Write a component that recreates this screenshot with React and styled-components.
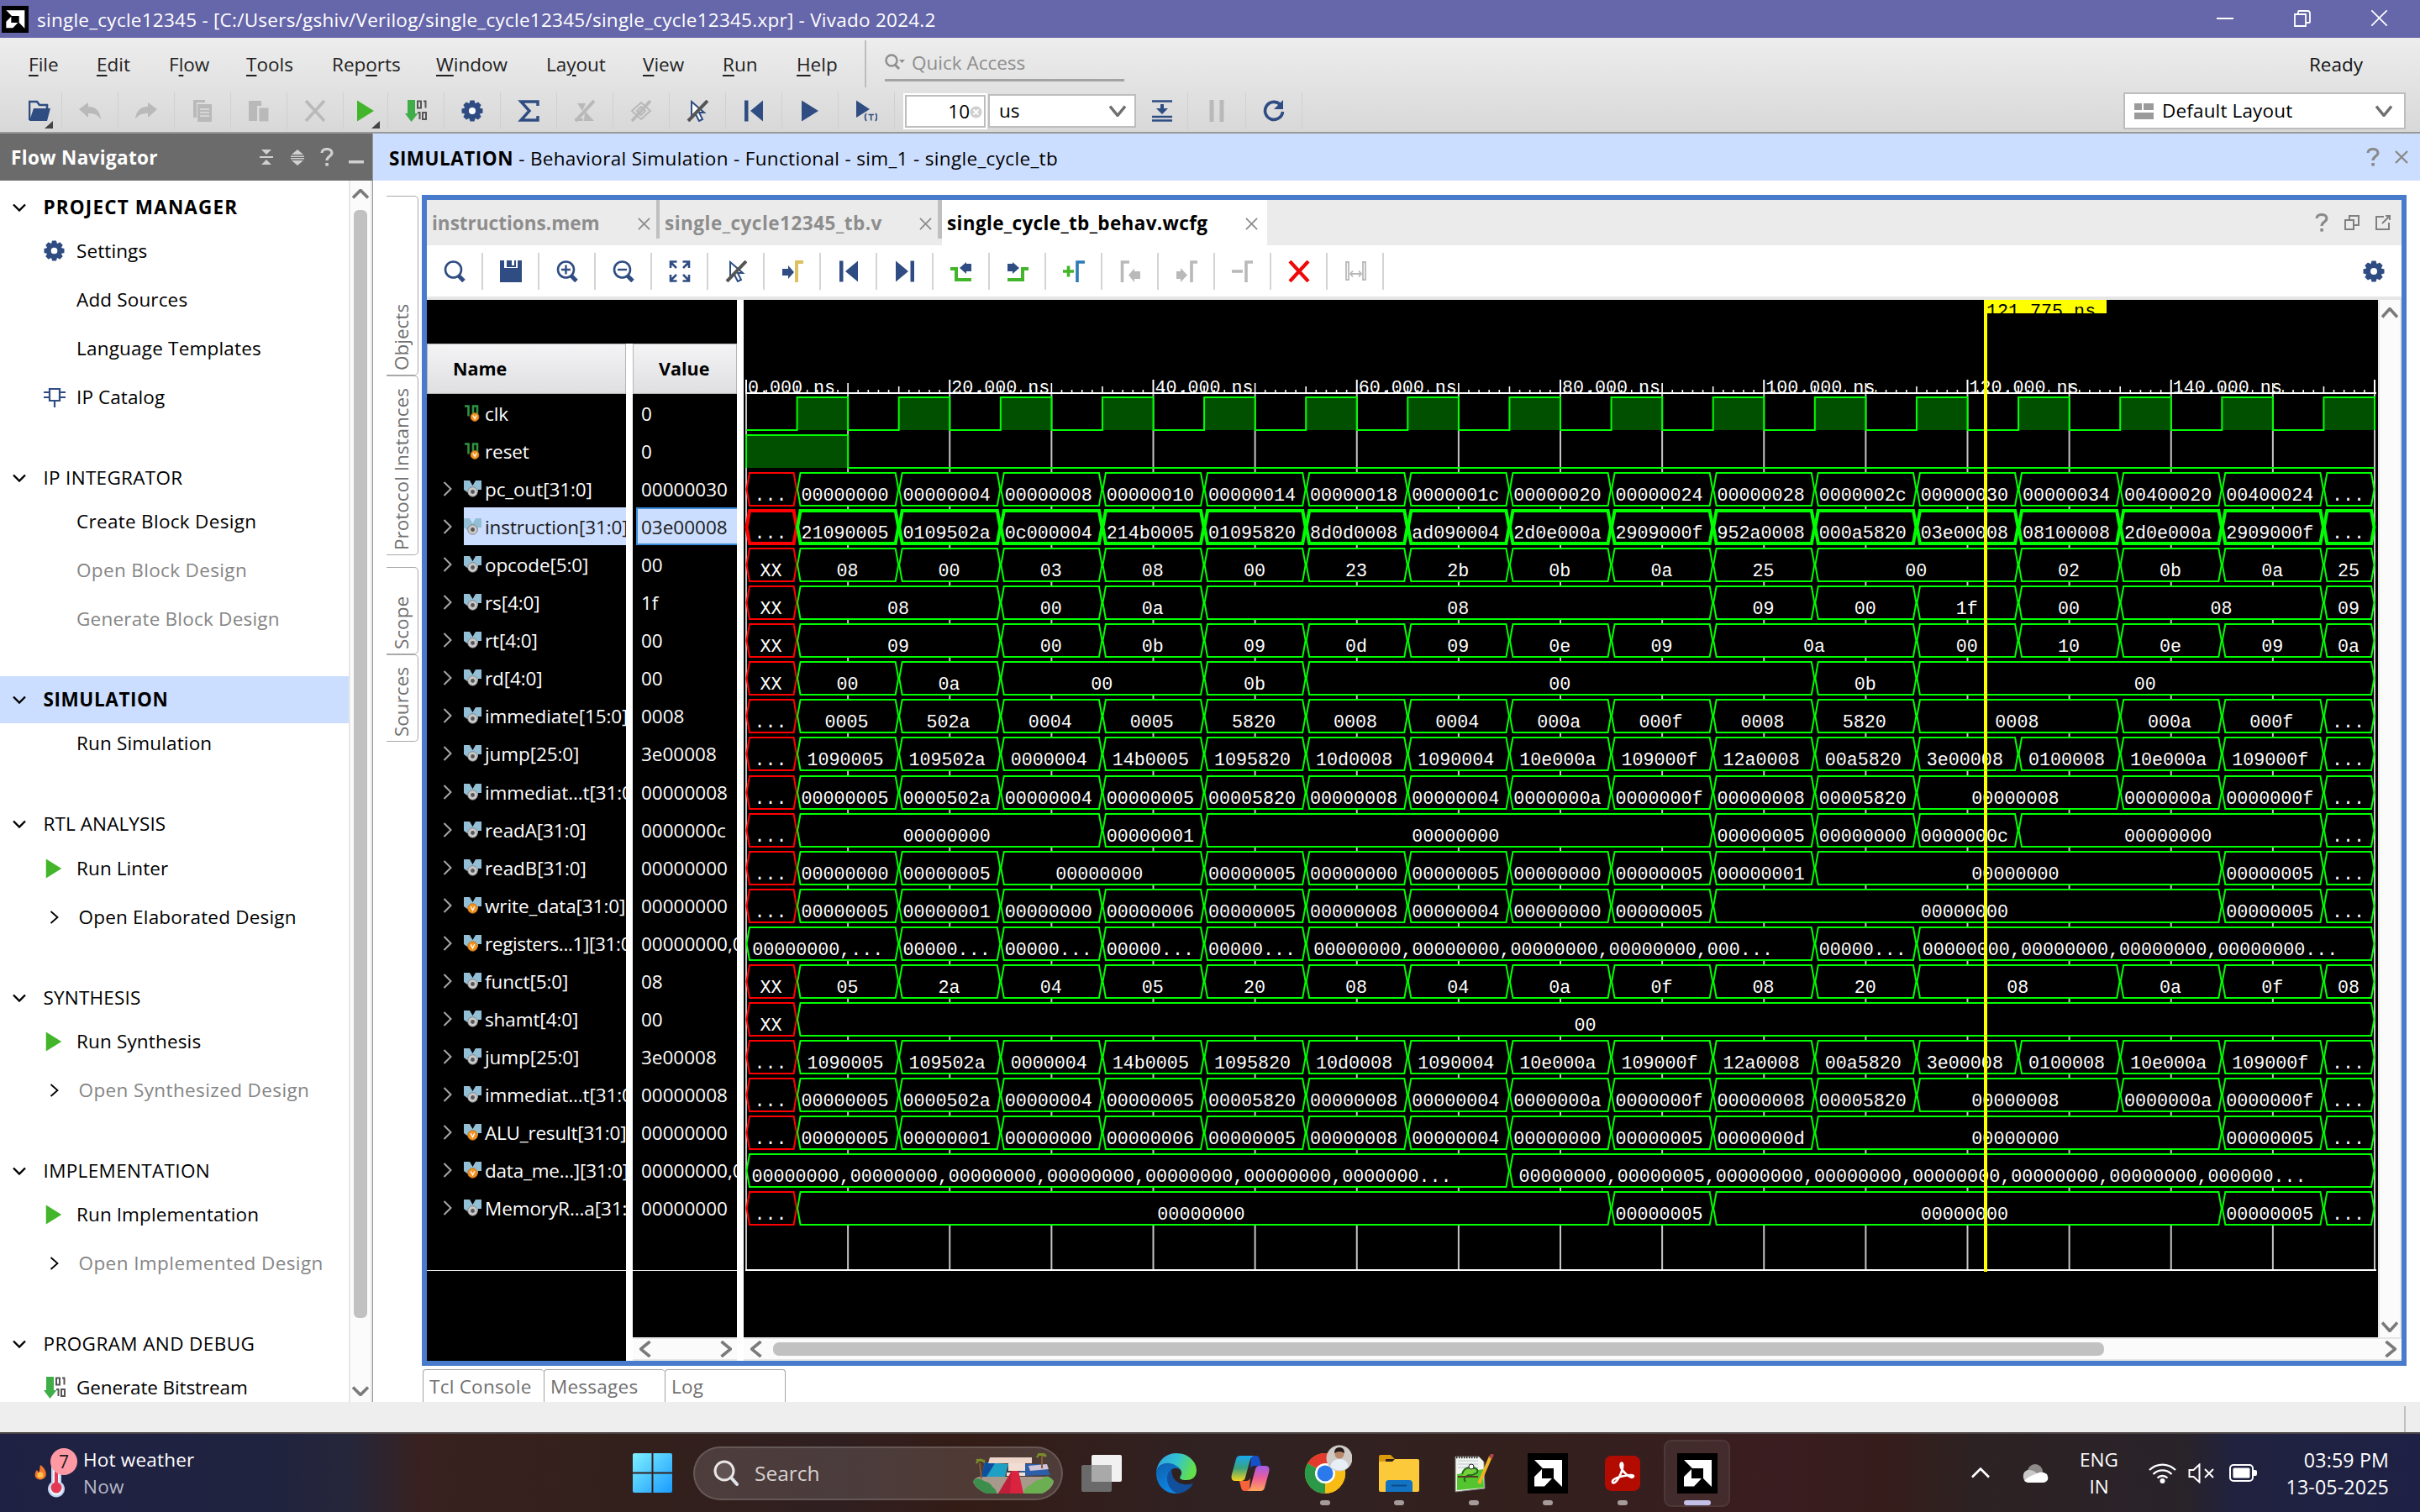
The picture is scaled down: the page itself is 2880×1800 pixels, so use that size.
import React from 'react';
import styled, { createGlobalStyle, css } from 'styled-components';

const UI = '"Open Sans", "Noto Sans", sans-serif';
const MONO = '"Liberation Mono", monospace';
const NAVY = '#2f4d82';
const GREEN = '#42b52a';
const OFF = '#b9b9b9';

const Global = createGlobalStyle`
  *, *::before, *::after { box-sizing: border-box; }
  html, body { margin: 0; padding: 0; background: #fff; }
  body { width: 2880px; height: 1800px; overflow: hidden; font-family: ${UI}; font-size: 22.5px; line-height: 30px; color: #000; }
  svg { display: block; flex: none; }
`;

const Screen = styled.div`
  width: 2880px; height: 1800px; display: flex; flex-direction: column; overflow: hidden; background: #fff;
`;

/* ---------- title, menus, toolbar ---------- */
const TitleBar = styled.header`
  height: 45px; flex: none; background: #6666aa; color: #fff; display: flex; align-items: center; padding-left: 2px;
`;
const TitleText = styled.span`flex: 1; padding: 2px 0 0 10px; white-space: pre; letter-spacing: 0.25px;`;
const WindowButtons = styled.div`display: flex; gap: 70px; padding-right: 38px; align-items: center; padding-bottom: 2px;`;

const Chrome = styled.div`
  height: 114px; flex: none; background: linear-gradient(#ededed, #d8d8d8); border-bottom: 2px solid #999;
  display: flex; flex-direction: column;
`;
const MenuBar = styled.nav`height: 62px; display: flex; padding-left: 34px; align-items: center;`;
const MenuItem = styled.span`width: ${p => p.$w}px; color: #222; white-space: nowrap; padding-top: 2px;`;
const Mn = styled.span`text-decoration: underline; text-decoration-thickness: 1.5px; text-underline-offset: 4px;`;
const QuickWrap = styled.div`
  border-left: 2px solid #bdbdbd; height: 56px; padding-left: 22px; display: flex; align-items: flex-start; flex: 1;
`;
const Quick = styled.div`
  width: 285px; height: 49px; border-bottom: 3px solid #a3a3a3; display: flex; align-items: center; gap: 6px; color: #8e8e8e; padding-top: 8px;
`;
const Ready = styled.span`padding-right: 68px; color: #111; padding-top: 2px;`;

const ToolBar = styled.div`height: 50px; display: flex; align-items: center; padding: 0 17px 0 15px;`;
const Tool = styled.div`
  width: ${p => p.$w || 67}px; height: 44px; border-right: 1px solid #d0d0d0; display: flex; align-items: center; justify-content: center;
  position: relative; padding-left: ${p => p.$pl || 0}px;
`;
const Corner = styled.svg`position: absolute; right: ${p => p.$r}px; bottom: 1px;`;
const NumBox = styled.div`
  width: 100px; height: 43px; margin-left: 10px; background: #fff;
  box-shadow: inset 0 0 0 2px #fff, inset 0 0 0 4px #bdbdbd; display: flex; align-items: center; justify-content: flex-end; padding: 2px 6px 0 2px;
`;
const Select = styled.div`
  width: ${p => p.$w}px; height: ${p => p.$h}px; border: 2px solid #bdbdbd; background: #fff; display: flex; align-items: center;
  padding: 0 ${p => p.$pr}px 0 11px; margin-left: ${p => p.$ml || 0}; gap: 10px;
`;
const Grow = styled.span`flex: 1; letter-spacing: ${p => p.$ls || 0}px;`;
const HeadName = styled.b`letter-spacing: 0.5px;`;

/* ---------- body ---------- */
const Body = styled.div`height: 1510px; flex: none; display: flex;`;
const Side = styled.aside`width: 444px; display: flex; flex-direction: column; border-right: 1px solid #999;`;
const SideHead = styled.div`
  height: 56px; flex: none; background: #6b6b6b; color: #fff; font-weight: 700; display: flex; align-items: center; padding: 2px 10px 0 13px;
  letter-spacing: 0.35px;
`;
const HeadIcons = styled.div`margin-left: auto; display: flex; align-items: center; gap: 18px; padding-bottom: 2px;`;
const SideBody = styled.div`flex: 1; min-height: 0; display: flex;`;
const Tree = styled.div`width: 415px; height: 1454px; padding-top: 3.5px; overflow: hidden;`;
const Section = styled.section`margin-bottom: 39px;`;
const Heading = styled.div`
  height: 56px; display: flex; align-items: center; font-weight: ${p => (p.$bold ? 700 : 400)}; background: ${p => (p.$active ? '#ccdeff' : 'transparent')};
  letter-spacing: ${p => p.$ls || 0.2}px;
`;
const ChevSlot = styled.span`width: 51.5px; padding-left: 15px;`;
const Items = styled.div`margin-top: -4.75px;`;
const Item = styled.div`
  height: 58px; display: flex; align-items: center; color: ${p => (p.$off ? '#858585' : '#000')}; letter-spacing: ${p => p.$ls || 0}px;
`;
const IconSlot = styled.span`width: ${p => (p.$open ? 93.5 : 91)}px; padding-left: ${p => (p.$open ? 59 : 52)}px;`;
const VTrack = styled.div`
  width: 28px; background: #fbfbfb; border-left: 2px solid #e6e6e6; border-right: 2px solid #e6e6e6; display: flex; flex-direction: column;
  align-items: center; padding: ${p => p.$pad || '10px 0'};
`;
const VThumb = styled.div`width: 16px; height: 1319px; margin-top: 13px; border-radius: 6px; background: #c1c1c1;`;

const Main = styled.main`flex: 1; min-width: 0; display: flex; flex-direction: column;`;
const MainHead = styled.div`
  height: 56px; flex: none; background: #ccdeff; display: flex; align-items: center; padding: 3px 14px 0 19px; white-space: pre;
`;
const HeadTools = styled.div`display: flex; align-items: center; gap: 18px; padding-bottom: 3px;`;
const MainBody = styled.div`flex: 1; min-height: 0; display: flex; padding: 17px 16px 0 16px;`;
const Rail = styled.div`width: 38px; margin-right: 4px; padding-top: 1px;`;
const RailTab = styled.div`
  height: ${p => p.$h}px; width: 38px; margin-top: ${p => p.$mt || 0}px; border: 1.5px solid #a9a9a9; border-right: 0; border-radius: 5px 0 0 5px;
  writing-mode: vertical-rl; transform: rotate(180deg); color: #707070; padding-top: 5px; line-height: 35px; white-space: nowrap;
`;
const Center = styled.div`flex: 1; min-width: 0; display: flex; flex-direction: column;`;
const Panel = styled.div`height: 1394px; flex: none; border: 6px solid #497bcd; display: flex; flex-direction: column;`;
const Tabs = styled.div`height: 54px; flex: none; background: #ebebeb; display: flex; align-items: stretch;`;
const Tab = styled.div`
  width: ${p => p.$w}px; padding: 2px ${p => (p.$on ? 11 : 7)}px 0 6px; display: flex; align-items: center; justify-content: space-between; font-weight: 700;
  color: ${p => (p.$on ? '#000' : '#8d8d8d')}; background: ${p => (p.$on ? '#fff' : 'transparent')}; white-space: nowrap; letter-spacing: ${p => p.$ls || 0}px;
`;
const TabRule = styled.div`width: ${p => p.$w}px; height: 46px; background: #bfbfbf;`;
const TabIcons = styled.div`margin-left: auto; display: flex; align-items: center; gap: 19px; padding-right: 13px;`;
const Tools2 = styled.div`height: 65px; flex: none; border-bottom: 4px solid #e6e6e6; display: flex; align-items: center;`;
const Tool2 = styled.div`
  width: 67px; height: 44px; border-right: 2px solid #d4d4d4; display: flex; align-items: center; justify-content: center;
`;
const Wave = styled.div`flex: 1; min-height: 0; display: flex; background: #fff;`;
const Left = styled.div`width: 369px; flex: none; display: flex; flex-direction: column;`;
const LeftTop = styled.div`height: 52px; flex: none; background: #000;`;
const Cols = styled.div`flex: 1; display: flex; justify-content: space-between;`;
const NameCol = styled.div`width: 237px; background: #000; color: #fff; overflow: hidden;`;
const ValueCol = styled.div`width: 124px; background: #000; color: #fff; overflow: hidden; display: flex; flex-direction: column;`;
const ColHead = styled.div`
  height: 60px; flex: none; background: linear-gradient(#f4f4f5, #dfdfe2); border: 1px solid #b5b5b8; color: #000; font-weight: 700; font-size: 21.5px;
  display: flex; align-items: center; padding-left: 30px;
`;
const NameRow = styled.div`height: ${p => p.$h}px; display: flex; align-items: center; white-space: nowrap;`;
const Expander = styled.span`width: 44px; padding-left: 19px; flex: none;`;
const NameCell = styled.span`
  width: 193px; height: 100%; display: flex; align-items: center; gap: 4px; overflow: hidden; flex: none; letter-spacing: -0.2px;
  background: ${p => (p.$sel ? '#ccdeff' : 'transparent')}; color: ${p => (p.$sel ? '#1a1a1a' : '#fff')};
`;
const NameText = styled.span`padding-top: 2px; letter-spacing: ${p => p.$ls || -0.1}px;`;
const ValueRow = styled.div`
  height: ${p => p.$h}px; flex: none; display: flex; align-items: center; white-space: nowrap; padding-left: 10px; padding-top: 2px;
  ${p => p.$sel && css`background: #ccdeff; color: #1a1a1a; border: 2px solid #3c8edd; border-right: 0; margin-left: 4px; padding-left: 4px;`}
`;
const EndRule = styled.div`height: 53px; border-bottom: 1px solid #e8e8e8; flex: none;`;
const HTrack = styled.div`
  height: 28px; flex: none; background: #fbfbfb; border-top: 2px solid #e6e6e6; border-bottom: 2px solid #e6e6e6; display: flex; align-items: center;
  justify-content: space-between; padding: 0 6px 0 8px; margin-top: ${p => p.$mt || 0};
`;
const HThumb = styled.div`width: 1584px; height: 16px; margin: 0 auto 0 13px; border-radius: 7px; background: #c1c1c1;`;
const WaveSide = styled.div`width: 1973px; margin-left: 8px; display: flex; flex-direction: column;`;
const WaveTop = styled.div`height: 1235px; flex: none; display: flex; background: #000;`;
const SpaceDiv = styled.div`flex: 1;`;

const Bottom = styled.div`display: flex; padding: 4px 0 0 1px; height: 43px;`;
const BottomTab = styled.div`
  width: 144px; height: 39px; border: 1.5px solid #a3a3a3; border-bottom: 0; border-right-width: ${p => (p.$last ? 1.5 : 0)}px; border-radius: 4px 4px 0 0;
  padding: 5px 0 0 7px; color: #707070; white-space: nowrap; letter-spacing: 0.25px;
`;
const Status = styled.div`height: 36px; flex: none; background: #eeeeee; display: flex; padding: 5px 17px 0 0; justify-content: flex-end;`;
const StatusRule = styled.div`width: 2px; background: #bfbfbf;`;

/* ---------- taskbar ---------- */
const TaskBar = styled.footer`
  height: 95px; flex: none; border-top: 2px solid #4a4443; display: flex; align-items: center; color: #fff;
  background: linear-gradient(90deg, #1f2144 0, #20233f 320px, #26263a 420px, #38211f 500px, #33201c 740px, #301f20 1000px, #341c16 1150px, #302223 1450px, #33201d 1800px, #3a1d20 2120px, #351d1b 2250px, #2d2223 2350px, #29232a 2600px, #20223f 2660px, #1e2145 2880px);
`;
const Weather = styled.div`display: flex; width: 753px; padding-left: 38px; align-items: center; gap: 5px;`;
const Stack = styled.div`
  display: flex; flex-direction: column; align-items: ${p => p.$al || 'flex-start'}; line-height: 32px; width: ${p => p.$w || 'auto'}; white-space: nowrap;
  letter-spacing: ${p => p.$ls || 0}px; font-size: ${p => p.$fs || 22.5}px;
`;
const Dim = styled.span`color: #b6b8c6;`;
const Search = styled.div`
  width: 440px; height: 64px; margin-left: 25px; border-radius: 32px; background: rgba(255,255,255,0.135); border: 2px solid rgba(255,255,255,0.14);
  display: flex; align-items: center; padding: 0 9px 0 22px; color: #d6d0cf; font-size: 24.5px;
`;
const AppIcon = styled.div`
  width: ${p => p.$w || 88.5}px; height: 80px; display: flex; flex-direction: column; align-items: center; justify-content: center; position: relative;
  &::after { content: ''; display: ${p => (p.$run ? 'block' : 'none')}; position: absolute; bottom: ${p => (p.$on ? 0 : 2)}px; width: ${p => (p.$on ? 32 : 12)}px; height: 6px; border-radius: 3px;
    background: ${p => (p.$on ? '#c4bfe6' : '#a49b9a')}; }
  ${p => p.$on && css`background: rgba(255,255,255,0.06); border: 2px solid rgba(255,255,255,0.06); border-radius: 9px;`}
`;
const Apps = styled.div`display: flex; align-items: center; margin-left: 2px;`;
const Tray = styled.div`display: flex; align-items: center; margin-left: auto; padding-right: 37px;`;
const Gap = styled.span`width: ${p => p.$w}px; flex: none;`;

/* ---------- icons ---------- */
const I = ({ s = 26, w, h, vb, children, ...r }) => (
  <svg width={w || s} height={h || s} viewBox={vb || '0 0 26 26'} fill="none" {...r}>{children}</svg>
);
const Gear = ({ s = 26 }) => (
  <I s={s}>
    <g fill={NAVY}>
      {[0, 45, 90, 135].map(a => <path key={a} d="M10.500 0.500h5l1.500 5v15l-1.500 5h-5l-1.500-5v-15z" transform={`rotate(${a} 13 13)`} />)}
      <circle cx="13" cy="13" r="9.200" />
    </g>
    <circle cx="13" cy="13" r="4" fill="#fff" />
  </I>
);
const Play = ({ s = 26, c = GREEN }) => <I s={s}><path d="M3 0.500L23 13 3 25.500z" fill={c} /></I>;
const Bits = () => (
  <I>
    <path d="M3 0h9v16h3.500L7.500 26 0 16h3z" fill="#3fae49" />
    <g stroke="#555" strokeWidth="2"><path d="M15 1.500h4v8h-4zM22 1.500h2.500v8M15 15h2.500v8M21 15h4v8h-4z" /></g>
  </I>
);
const Chip = () => (
  <I><path d="M7 3h12v14H7zM0 7h7M0 13h7M19 7h7M19 13h7M13 17v8" stroke={NAVY} strokeWidth="2.200" /></I>
);
const Chev = ({ d = 'down', c = '#000', w = 16, h = 9, sw = 2.4 }) => {
  const P = {
    down: `M1 1.500L${w / 2} ${h - 1.5}L${w - 1} 1.500`, up: `M1 ${h - 1.5}L${w / 2} 1.500L${w - 1} ${h - 1.5}`,
    right: `M1.500 1L${w - 1.5} ${h / 2}L1.500 ${h - 1}`, left: `M${w - 1.5} 1L1.500 ${h / 2}L${w - 1.5} ${h - 1}`,
  };
  return <I w={w} h={h} vb={`0 0 ${w} ${h}`}><path d={P[d]} stroke={c} strokeWidth={sw} /></I>;
};
const Cross = ({ s = 16, c = '#8a8a8a', sw = 2 }) => (
  <I s={s} vb="0 0 16 16"><path d="M1 1l14 14M15 1L1 15" stroke={c} strokeWidth={sw} /></I>
);
const Help = ({ c = '#8a8a8a' }) => (
  <I w={16} h={22} vb="0 0 16 22"><path d="M2 6c0-6 12-6 12 0 0 4-6 4-6 9" stroke={c} strokeWidth="3.200" /><path d="M6.300 18h3.600v3.600H6.300z" fill={c} /></I>
);
const Amd = ({ s = 48 }) => (
  <I s={s} vb="0 0 48 48">
    <path d="M0 0h48v48H0z" fill="#000" />
    <path d="M8 8h33v32L31 30V18H18zM8 28l9-9v11h12l-9 9.500H8z" fill="#fff" />
  </I>
);
const NoCursor = () => (
  <I><path d="M6 2v19l5-4 4 8 4-2-4-8h6z" fill="#fff" stroke={NAVY} strokeWidth="2" /><path d="M2 25L25 1" stroke="#555" strokeWidth="4" /></I>
);
const Skip = ({ flip }) => (
  <I><g transform={flip ? 'translate(26 0) scale(-1 1)' : undefined} fill={NAVY}><path d="M2 0.500h4.500v25H2zM24 0.500v25L9 13z" /></g></I>
);
const Mag = ({ sign }) => (
  <I>
    <circle cx="11.500" cy="11" r="9.500" stroke={NAVY} strokeWidth="2.600" />
    <path d="M18 18.500l6 6" stroke={NAVY} strokeWidth="5" />
    {sign && <path d={sign === '+' ? 'M6 11h11M11.500 5.500v11' : 'M6 11h11'} stroke={NAVY} strokeWidth="2.400" />}
  </I>
);
const Signal = ({ kind }) => (
  <I w={21} h={20} vb="0 0 21 20">
    {kind === 'scalar'
      ? <path d="M1 1.500h4.500v12M11 13V1.500h5v13" stroke="#2f9140" strokeWidth="2.600" />
      : <path d="M0 0h7l3.500 6L14 0h7v11h-4v3H4l-4-3z" fill="#93bfd6" />}
    <circle cx={kind === 'scalar' ? 13 : 10.5} cy={kind === 'scalar' ? 14.5 : 13.5} r={kind === 'scalar' ? 5 : 5.8} fill={kind === 'net' ? '#c9c9c9' : '#f39323'} stroke={kind === 'net' ? '#777' : '#b96a10'} strokeWidth="0.800" />
    {kind === 'net'
      ? <circle cx="10.500" cy="13.500" r="2.400" fill="#555" />
      : <path d={kind === 'scalar' ? 'M10.800 12.500l2.200 4 2.200-4' : 'M8.300 11.300l2.200 4.500 2.200-4.500'} stroke="#fff" strokeWidth="1.300" />}
  </I>
);

const FIRST_TOOLS = [
  { w: 59, pl: 6, corner: 10, i: <I><path d="M1 24V2h9l3 4h9v5" stroke={NAVY} strokeWidth="2.600" /><path d="M6 10h20l-4 15H1z" fill={NAVY} /></I> },
  { i: <I><path d="M0 11L11 3v5c8 0 14 4 15 15-4-6-8-7-15-7v5z" fill={OFF} /></I> },
  { i: <I><path d="M26 11L15 3v5C7 8 1 12 0 23c4-6 8-7 15-7v5z" fill={OFF} /></I> },
  { i: <I><path d="M2 0h14v3H6v18H2z" fill={OFF} /><path d="M7 5h17v21H7z" fill={OFF} /><path d="M10 11h11M10 15h11M10 19h11" stroke="#dedede" strokeWidth="1.600" /></I> },
  { i: <I><path d="M1 1h15v6h-5v18H1z" fill={OFF} /><path d="M13 9h12v17H13z" fill={OFF} stroke="#dedede" /></I> },
  { i: <I><path d="M2 1l22 24M24 1L2 25" stroke={OFF} strokeWidth="3.600" /></I> },
  { w: 53, corner: 9, i: <Play /> },
  { i: <Bits /> },
  { i: <Gear /> },
  { i: <I><path d="M24 7V2H4l10 11L4 24h20v-5" stroke={NAVY} strokeWidth="3.400" /></I> },
  { i: <I><path d="M2 25L24 1" stroke={OFF} strokeWidth="4" /><path d="M4 4h10l-4 9zM13 13l11 12H12zM1 25h10v-3H1z" fill={OFF} /></I> },
  { i: <I><path d="M2 25L24 1" stroke={OFF} strokeWidth="3.600" /><path d="M2 13L13 3l11 10-11 10zM8 13l5-5 5 5-5 5z" stroke={OFF} strokeWidth="2" /></I> },
  { i: <NoCursor /> },
  { i: <Skip /> },
  { i: <Play c={NAVY} /> },
  { i: <I><path d="M1 0.500L17 11 1 21z" fill={NAVY} /><path d="M13 16q-3 4 0 9M24 16q3 4 0 9M15.500 17.500h6.500M18.700 17.500v7" stroke={NAVY} strokeWidth="1.600" /></I> },
];

const WAVE_TOOLS = [
  <Mag />,
  <I><path d="M0 0h5v9h16V0h5v26H0z" fill={NAVY} /><path d="M8 0h6v6h3V0h2v8H8z" fill={NAVY} /></I>,
  <Mag sign="+" />,
  <Mag sign="-" />,
  <I><g stroke={NAVY} strokeWidth="2.600"><path d="M2 9V1.500h7.500M2 2l7 7M24 9V1.500h-7.500M24 2l-7 7M2 17v7.500h7.500M2 24l7-7M24 17v7.500h-7.500M24 24l-7-7" /></g></I>,
  <NoCursor />,
  <I><path d="M1 10h7V6l7 8-7 8v-4H1z" fill={NAVY} /><path d="M18 26V2h8" stroke="#dcc25e" strokeWidth="4" /></I>,
  <Skip />,
  <Skip flip />,
  <I><path d="M25 4v9h-6v3l-8-7 8-7v2z" fill={NAVY} /><path d="M0 10h7v13h18" stroke={GREEN} strokeWidth="4" /></I>,
  <I><path d="M1 4v9h6v3l8-7-8-7v2z" fill={NAVY} /><path d="M26 10h-7v13H1" stroke={GREEN} strokeWidth="4" /></I>,
  <I><path d="M0 13h13M6.500 6.500v13" stroke={GREEN} strokeWidth="3.600" /><path d="M17 26V2h9" stroke="#2c7bb6" strokeWidth="3.600" /></I>,
  <I><path d="M3.500 26V2H12" stroke={OFF} strokeWidth="3.600" /><path d="M25 13v9h-7v4l-7-8.500 7-8v3.500z" fill={OFF} /></I>,
  <I><path d="M19 26V2h7" stroke={OFF} strokeWidth="3.600" /><path d="M1 13v9h5v4l8-8.500L6 9v4z" fill={OFF} /></I>,
  <I><path d="M17 26V2h8" stroke={OFF} strokeWidth="3.600" /><path d="M0 13h13" stroke={OFF} strokeWidth="3.600" /></I>,
  <I><path d="M2 1l22 24M24 1L2 25" stroke="#ee0a0a" strokeWidth="4.200" /></I>,
  <I><path d="M2 2h3v21H2zM22 2h3v21h-3z" stroke={OFF} strokeWidth="1.800" /><path d="M7 16h13M10 12.500L7 16l3 3.500M17 12.500l3 3.500-3 3.500" stroke={OFF} strokeWidth="1.800" /></I>,
];

/* ---------- sidebar data ---------- */
const TREE = [
  { t: 'PROJECT MANAGER', bold: 1, ls: 1.15, items: [['Settings', 'gear', 0, 0.1], ['Add Sources', 0, 0, 0.15], ['Language Templates', 0, 0, 0.2], ['IP Catalog', 'chip', 0, 0.1]] },
  { t: 'IP INTEGRATOR', ls: 0.3, items: [['Create Block Design', 0, 0, 0.3], ['Open Block Design', 0, 1, 0.35], ['Generate Block Design', 0, 1, 0.22]] },
  { t: 'SIMULATION', bold: 1, ls: 0.6, active: 1, items: [['Run Simulation', 0, 0, 0.15]] },
  { t: 'RTL ANALYSIS', ls: 0.1, items: [['Run Linter', 'play', 0, 0.1], ['Open Elaborated Design', 'open', 0, 0.2]] },
  { t: 'SYNTHESIS', ls: 0.2, items: [['Run Synthesis', 'play', 0, 0.15], ['Open Synthesized Design', 'open', 1, 0.38]] },
  { t: 'IMPLEMENTATION', ls: 0.35, items: [['Run Implementation', 'play', 0, 0.1], ['Open Implemented Design', 'open', 1, 0.42]] },
  { t: 'PROGRAM AND DEBUG', ls: 0.4, items: [['Generate Bitstream', 'bits', 0, -0.12]] },
];
const SIDE_ICON = {
  gear: <Gear s={25} />, chip: <Chip />, play: <Play s={24} />, bits: <Bits />, open: <Chev d="right" w={11} h={16} sw={1.8} />,
};

/* ---------- waveform data: [text, number of 10 ns cycles] ---------- */
const Z = '00000000';
const one = s => s.split(' ').map(v => [v, 1]);
const IMM32 = [...one('00000005 0000502a 00000004 00000005 00005820 00000008 00000004 0000000a 0000000f 00000008 00005820'), ['00000008', 2], ...one('0000000a 0000000f')];
const JUMP = one('1090005 109502a 0000004 14b0005 1095820 10d0008 1090004 10e000a 109000f 12a0008 00a5820 3e00008 0100008 10e000a 109000f');
const SIGNALS = [
  { n: 'clk', v: '0', k: 'scalar' },
  { n: 'reset', v: '0', k: 'scalar' },
  { n: 'pc_out[31:0]', v: '00000030', x: '...', e: '...', d: one('00000000 00000004 00000008 00000010 00000014 00000018 0000001c 00000020 00000024 00000028 0000002c 00000030 00000034 00400020 00400024') },
  { n: 'instruction[31:0]', v: '03e00008', sel: 1, x: '...', e: '...', d: one('21090005 0109502a 0c000004 214b0005 01095820 8d0d0008 ad090004 2d0e000a 2909000f 952a0008 000a5820 03e00008 08100008 2d0e000a 2909000f') },
  { n: 'opcode[5:0]', v: '00', x: 'XX', e: '25', d: [...one('08 00 03 08 00 23 2b 0b 0a 25'), ['00', 2], ...one('02 0b 0a')] },
  { n: 'rs[4:0]', v: '1f', x: 'XX', e: '09', d: [['08', 2], ['00', 1], ['0a', 1], ['08', 5], ...one('09 00 1f 00'), ['08', 2]] },
  { n: 'rt[4:0]', v: '00', x: 'XX', e: '0a', d: [['09', 2], ...one('00 0b 09 0d 09 0e 09'), ['0a', 2], ...one('00 10 0e 09')] },
  { n: 'rd[4:0]', v: '00', x: 'XX', d: [['00', 1], ['0a', 1], ['00', 2], ['0b', 1], ['00', 5], ['0b', 1], ['00', 4.5]] },
  { n: 'immediate[15:0]', v: '0008', x: '...', e: '...', d: [...one('0005 502a 0004 0005 5820 0008 0004 000a 000f 0008 5820'), ['0008', 2], ...one('000a 000f')] },
  { n: 'jump[25:0]', v: '3e00008', x: '...', e: '...', d: JUMP },
  { n: 'immediat...t[31:0]', v: '00000008', x: '...', e: '...', d: IMM32 },
  { n: 'readA[31:0]', v: '0000000c', x: '...', e: '...', d: [[Z, 3], ['00000001', 1], [Z, 5], ['00000005', 1], [Z, 1], ['0000000c', 1], [Z, 3]] },
  { n: 'readB[31:0]', v: Z, x: '...', e: '...', d: [[Z, 1], ['00000005', 1], [Z, 2], ...one('00000005 00000000 00000005 00000000 00000005 00000001'), [Z, 4], ['00000005', 1]] },
  { n: 'write_data[31:0]', v: Z, k: 'var', x: '...', e: '...', d: [...one('00000005 00000001 00000000 00000006 00000005 00000008 00000004 00000000 00000005'), [Z, 5], ['00000005', 1]] },
  { n: 'registers...1][31:0]', ls: -0.35, v: '00000000,0', k: 'var', d: [['00000000,...', 1.5], ...one('00000... 00000... 00000... 00000...'), ['00000000,00000000,00000000,00000000,000...', 5], ['00000...', 1], ['00000000,00000000,00000000,00000000...', 4.5]] },
  { n: 'funct[5:0]', v: '08', x: 'XX', e: '08', d: [...one('05 2a 04 05 20 08 04 0a 0f 08 20'), ['08', 2], ...one('0a 0f')] },
  { n: 'shamt[4:0]', v: '00', x: 'XX', d: [['00', 15.5]] },
  { n: 'jump[25:0]', v: '3e00008', x: '...', e: '...', d: JUMP },
  { n: 'immediat...t[31:0]', v: '00000008', x: '...', e: '...', d: IMM32 },
  { n: 'ALU_result[31:0]', ls: -0.2, v: Z, k: 'var', x: '...', e: '...', d: [...one('00000005 00000001 00000000 00000006 00000005 00000008 00000004 00000000 00000005 0000000d'), [Z, 4], ['00000005', 1]] },
  { n: 'data_me...][31:0]', ls: -0.2, v: '00000000,0', k: 'var', d: [['00000000,00000000,00000000,00000000,00000000,00000000,0000000...', 7.5], ['00000000,00000005,00000000,00000000,00000000,00000000,00000000,000000...', 8.5]] },
  { n: 'MemoryR...a[31:0]', v: Z, x: '...', e: '...', d: [[Z, 8], ['00000005', 1], [Z, 5], ['00000005', 1]] },
];
const rowH = i => (i === 9 ? 46 : 45);
const rowY = i => 112 + i * 45 + (i >= 10 ? 1 : 0);
const nsX = t => 3 + t * 12.1125;

const Label = styled.text`font-family: ${MONO}; font-size: 21.7px; fill: ${p => p.$c || '#fff'}; white-space: pre;`;

const Cell = ({ y, a, b, text, red, sel }) => {
  const x0 = nsX(a) + 0.5, x1 = nsX(b) - 0.5, s = 3.5;
  const t = y + 4, m = y + 23.5, u = y + 43;
  return (
    <g>
      <path d={`M${x0} ${m}L${x0 + s} ${t}H${x1 - s}L${x1} ${m}L${x1 - s} ${u}H${x0 + s}Z`} fill="#000" stroke={red ? '#ff0000' : '#00ff00'} strokeWidth={sel ? 4 : 2} />
      <Label x={(x0 + x1) / 2 - 7 * text.length + 0.3} y={y + 37}>{text}</Label>
    </g>
  );
};

const WaveCanvas = () => {
  const cells = [];
  SIGNALS.forEach((s, i) => {
    if (!s.d) return;
    let t = 0;
    if (s.x) { cells.push({ i, a: 0, b: 5, text: s.x, red: true, sel: s.sel }); t = 5; }
    s.d.forEach(([text, n]) => { cells.push({ i, a: t, b: t + n * 10, text, sel: s.sel }); t += n * 10; });
    if (s.e) cells.push({ i, a: t, b: 160, text: s.e, sel: s.sel });
  });
  const ticks = Array.from({ length: 161 }, (_, t) => t);
  const clk = Array.from({ length: 16 }, (_, k) => k * 10 + 5);
  return (
    <svg width="1945" height="1235" viewBox="0 0 1945 1235">
      {ticks.filter(t => t % 10 === 0).map(t => <path key={t} d={`M${nsX(t)} 112V1155`} stroke="#c4c4c4" strokeWidth="2" />)}
      {ticks.map(t => (
        <path key={t} d={`M${nsX(t)} ${t % 20 === 0 ? 95 : t % 10 === 0 ? 99 : t % 5 === 0 ? 103 : 107}V111`} stroke="#fff" strokeWidth={t % 20 ? 1.6 : 2} />
      ))}
      <path d="M2 111H1943M2 1155H1943" stroke="#fff" strokeWidth="2" />
      {ticks.filter(t => t % 20 === 0 && t < 160).map(t => <Label key={t} x={nsX(t) + 2} y="110.500">{`${t}.000 ns`}</Label>)}
      {clk.map(t => <path key={t} d={`M${nsX(t)} 116H${nsX(t + 5)}V155H${nsX(t)}z`} fill="#005000" />)}
      <path d={`M3 155${clk.map(t => `H${nsX(t)}V116H${nsX(t + 5)}V155`).join('')}`} stroke="#00ff00" strokeWidth="2" fill="none" />
      <path d={`M3 161H${nsX(10)}V200H3z`} fill="#005000" />
      <path d={`M3 200V161H${nsX(10)}V200H${nsX(160)}`} stroke="#00ff00" strokeWidth="2" fill="none" />
      {cells.map((c, k) => <Cell key={k} y={rowY(c.i)} {...c} />)}
      <path d={`M${nsX(121.775)} 0V1157`} stroke="#ffff00" strokeWidth="4" />
      <svg x={nsX(121.775) - 2} y="0" width="146" height="16" viewBox="0 0 146 16">
        <path d="M0 0h146v16H0z" fill="#ffff00" />
        <Label x="3" y="20" $c="#000">121.775 ns</Label>
      </svg>
    </svg>
  );
};

const Menu = ({ w, a = '', u, b }) => <MenuItem $w={w}>{a}<Mn>{u}</Mn>{b}</MenuItem>;

export default function App() {
  return (
    <Screen>
      <Global />
      <TitleBar>
        <Amd s={32} />
        <TitleText>single_cycle12345 - [C:/Users/gshiv/Verilog/single_cycle12345/single_cycle12345.xpr] - Vivado 2024.2</TitleText>
        <WindowButtons>
          <I w={22} h={20} vb="0 0 22 20"><path d="M1 10h20" stroke="#fff" strokeWidth="2" /></I>
          <I w={22} h={22} vb="0 0 22 22"><path d="M2 6h13v14H2zM6 6V3q0-1 1-1h10q3 0 3 3v10q0 1-1 1h-3" stroke="#fff" strokeWidth="1.800" /></I>
          <Cross s={21} c="#fff" sw={1.3} />
        </WindowButtons>
      </TitleBar>
      <Chrome>
        <MenuBar>
          <Menu w={81} u="F" b="ile" /><Menu w={86} u="E" b="dit" /><Menu w={92} a="F" u="l" b="ow" /><Menu w={102} u="T" b="ools" />
          <Menu w={124} a="Rep" u="o" b="rts" /><Menu w={131} u="W" b="indow" /><Menu w={115} a="La" u="y" b="out" /><Menu w={95} u="V" b="iew" />
          <Menu w={88} u="R" b="un" /><Menu w={81} u="H" b="elp" />
          <QuickWrap>
            <Quick>
              <I w={26} h={22} vb="0 0 26 22"><circle cx="8" cy="8" r="6.500" stroke="#8e8e8e" strokeWidth="2.400" /><path d="M12 13l5 5" stroke="#8e8e8e" strokeWidth="3" /><path d="M17 7h7l-3.500 4z" fill="#8e8e8e" /></I>
              <span>Quick Access</span>
            </Quick>
          </QuickWrap>
          <Ready>Ready</Ready>
        </MenuBar>
        <ToolBar>
          {FIRST_TOOLS.map((t, k) => (
            <Tool key={k} $w={t.w} $pl={t.pl}>
              {t.i}
              {t.corner && <Corner $r={t.corner} width="10" height="9"><path d="M10 0v9H0z" fill="#444" /></Corner>}
            </Tool>
          ))}
          <NumBox>10<I s={15} vb="0 0 15 15"><circle cx="7.500" cy="7.500" r="7" fill="#cfcfcf" /><path d="M4.500 4.500l6 6M10.500 4.500l-6 6" stroke="#fff" strokeWidth="1.800" /></I></NumBox>
          <Select $w={176} $h={40} $pr={10} $ml="1px"><Grow>us</Grow><Chev w={20} h={14} sw={3.4} c="#6f6f6f" /></Select>
          <Tool $w={62}><I><path d="M1 1.500h24M1 20h24M1 24.500h24" stroke={NAVY} strokeWidth="2.500" /><path d="M11 5h4v5h5l-7 7-7-7h5z" fill={NAVY} /></I></Tool>
          <Tool $w={69}><I><path d="M7 0v26M19 0v26" stroke={OFF} strokeWidth="5" /></I></Tool>
          <Tool><I><path d="M21 6a10.500 10.500 0 1 0 2.500 8" stroke={NAVY} strokeWidth="3.600" /><path d="M24 0v11H13z" fill={NAVY} /></I></Tool>
          <Select $w={336} $h={44} $pr={14} $ml="auto">
            <I w={23} h={19} vb="0 0 23 19"><path d="M0 0h9v8H0zM11 0h12v8H11zM0 11h23v8H0z" fill="#9b9b9b" /></I>
            <Grow $ls={0.15}>Default Layout</Grow><Chev w={20} h={14} sw={3.4} c="#6f6f6f" />
          </Select>
        </ToolBar>
      </Chrome>
      <Body>
        <Side>
          <SideHead>
            Flow Navigator
            <HeadIcons>
              <I w={20} h={20} vb="0 0 20 20"><path d="M4 1h12l-6 6zM2 9h16v2H2zM10 13l6 6H4z" fill="#d0d0d0" /></I>
              <I w={18} h={20} vb="0 0 18 20"><path d="M9 1l7 6H2zM1 8.500h16v1.500H1zM1 11h16v1.500H1zM2 14h14l-7 6z" fill="#d0d0d0" /></I>
              <Help c="#d0d0d0" />
              <I w={18} h={20} vb="0 0 18 20"><path d="M0 14h18v3.500H0z" fill="#d0d0d0" /></I>
            </HeadIcons>
          </SideHead>
          <SideBody>
            <Tree>
              {TREE.map(s => (
                <Section key={s.t}>
                  <Heading $bold={s.bold} $active={s.active} $ls={s.ls}><ChevSlot><Chev w={16} h={10} /></ChevSlot>{s.t}</Heading>
                  <Items>
                    {s.items.map(([t, ic, off, ls]) => (
                      <Item key={t} $off={off} $ls={ls}><IconSlot $open={ic === 'open'}>{SIDE_ICON[ic]}</IconSlot>{t}</Item>
                    ))}
                  </Items>
                </Section>
              ))}
            </Tree>
            <VTrack $pad="10px 0 7px">
              <Chev d="up" w={20} h={12} sw={3.6} c="#7a7a7a" />
              <VThumb />
              <SpaceDiv />
              <Chev w={20} h={12} sw={3.6} c="#7a7a7a" />
            </VTrack>
          </SideBody>
        </Side>
        <Main>
          <MainHead>
            <HeadName>SIMULATION</HeadName><Grow $ls={0.33}> - Behavioral Simulation - Functional - sim_1 - single_cycle_tb</Grow>
            <HeadTools><Help /><Cross s={16} sw={2.4} /></HeadTools>
          </MainHead>
          <MainBody>
            <Rail>
              <RailTab $h={214}>Objects</RailTab>
              <RailTab $h={214}>Protocol Instances</RailTab>
              <RailTab $h={104} $mt={14}>Scope</RailTab>
              <RailTab $h={104}>Sources</RailTab>
            </Rail>
            <Center>
              <Panel>
                <Tabs>
                  <Tab $w={273}>instructions.mem<Cross s={15} sw={1.8} /></Tab><TabRule $w={4} />
                  <Tab $w={331} $ls={0.5}>single_cycle12345_tb.v<Cross s={15} sw={1.8} /></Tab><TabRule $w={5} />
                  <Tab $w={387} $ls={0.36} $on>single_cycle_tb_behav.wcfg<Cross s={15} sw={1.8} /></Tab>
                  <TabIcons>
                    <Help />
                    <I s={18} vb="0 0 18 18"><path d="M1 6h10v11H1zM6 6V1h11v11h-6" stroke="#808080" strokeWidth="2" /></I>
                    <I s={18} vb="0 0 18 18"><path d="M10 2H1v15h15V9M8 10l8-8M12 1h5v5" stroke="#808080" strokeWidth="2" /></I>
                  </TabIcons>
                </Tabs>
                <Tools2>
                  {WAVE_TOOLS.map((ic, k) => <Tool2 key={k}>{ic}</Tool2>)}
                  <SpaceDiv /><Gear /><Gap $w={20} />
                </Tools2>
                <Wave>
                  <Left>
                    <LeftTop />
                    <Cols>
                      <NameCol>
                        <ColHead>Name</ColHead>
                        {SIGNALS.map((s, i) => (
                          <NameRow key={i} $h={rowH(i)}>
                            <Expander>{s.k !== 'scalar' && <Chev d="right" w={11} h={18} c="#a8a8a8" sw={2} />}</Expander>
                            <NameCell $sel={s.sel}><Signal kind={s.k || 'net'} /><NameText $ls={s.ls}>{s.n}</NameText></NameCell>
                          </NameRow>
                        ))}
                        <EndRule />
                      </NameCol>
                      <ValueCol>
                        <ColHead>Value</ColHead>
                        {SIGNALS.map((s, i) => <ValueRow key={i} $h={rowH(i)} $sel={s.sel}>{s.v}</ValueRow>)}
                        <EndRule />
                        <HTrack $mt="auto">
                          <Chev d="left" w={14} h={20} sw={3.6} c="#7a7a7a" /><Chev d="right" w={14} h={20} sw={3.6} c="#7a7a7a" />
                        </HTrack>
                      </ValueCol>
                    </Cols>
                  </Left>
                  <WaveSide>
                    <WaveTop>
                      <WaveCanvas />
                      <VTrack $pad="9px 0 6px">
                        <Chev d="up" w={20} h={13} sw={3.6} c="#7a7a7a" /><SpaceDiv /><Chev w={20} h={13} sw={3.6} c="#7a7a7a" />
                      </VTrack>
                    </WaveTop>
                    <HTrack>
                      <Chev d="left" w={14} h={20} sw={3.6} c="#7a7a7a" />
                      <HThumb />
                      <Chev d="right" w={14} h={20} sw={3.6} c="#7a7a7a" />
                    </HTrack>
                  </WaveSide>
                </Wave>
              </Panel>
              <Bottom>
                <BottomTab>Tcl Console</BottomTab><BottomTab>Messages</BottomTab><BottomTab $last>Log</BottomTab>
              </Bottom>
            </Center>
          </MainBody>
        </Main>
      </Body>
      <Status><StatusRule /></Status>
      <TaskBar>
        <Weather>
          <I w={56} h={60} vb="0 0 56 60">
            <path d="M10 20c6 4 8 10 6 14-3 5-10 4-12 0-1-4 1-7 2-8l2 3c2-3 1-6 2-9z" fill="#f5792a" /><circle cx="10" cy="32" r="3.500" fill="#ffc24d" />
            <path d="M24 18h10v23a9 9 0 1 1-10 0z" fill="#e8f1fb" stroke="#bcd6f3" strokeWidth="2" /><circle cx="29" cy="47" r="6.500" fill="#e23a52" /><path d="M27 26h4v22h-4z" fill="#e23a52" />
            <circle cx="38" cy="16" r="16" fill="#ff9aa5" />
            <text x="38" y="24" textAnchor="middle" fontFamily="Open Sans" fontSize="21" fill="#1c1c1c">7</text>
          </I>
          <Stack $ls={0.2}><span>Hot weather</span><Dim>Now</Dim></Stack>
        </Weather>
        <I s={47} vb="0 0 47 47">
          <defs><linearGradient id="win" x1="0" y1="0" x2="1" y2="1" gradientUnits="objectBoundingBox"><stop offset="0" stopColor="#7ef0ff" /><stop offset="1" stopColor="#1a9bff" /></linearGradient></defs>
          <path d="M2 0h20.500v22.500H0V2q0-2 2-2zM24.500 0H45q2 0 2 2v20.500H24.500zM0 24.500h22.500V47H2q-2 0-2-2zM24.500 24.500H47V45q0 2-2 2H24.500z" fill="url(#win)" />
        </I>
        <Search>
          <I w={30} h={32} vb="0 0 30 32"><circle cx="13" cy="13" r="11" stroke="#e9e6e6" strokeWidth="3" fill="rgba(255,255,255,.12)" /><path d="M21 21l7 8" stroke="#dfe4ea" strokeWidth="4" strokeLinecap="round" /></I>
          <Gap $w={19} /><Grow>Search</Grow>
          <I w={96} h={48} vb="0 0 96 48">
            <path d="M0 34q2-5 8-6h78q8 1 10 6-2 9-14 14H16Q3 43 0 34z" fill="#a79a8c" />
            <path d="M14 11l28 2-4 15H10z" fill="#1e9fc4" /><path d="M14 11l12 1-10 16h-6z" fill="#0d4f9c" />
            <path d="M56 13l30 0 6 13-36 1z" fill="#2c5fa8" /><path d="M66 15l22-2 2 6-22 2z" fill="#cfc4d8" />
            <path d="M20 5h50v7H18z" fill="#ecd5c8" /><path d="M42 12h20v9H42zM40 23h22v4H40z" fill="#f1ddd3" />
            <path d="M46 21h8l6 27H30z" fill="#d9233f" /><path d="M46 22l-2 26H30z" fill="#c01f3a" />
            <path d="M8 12l2 18M82 4l0 14" stroke="#8a5a35" strokeWidth="2" />
            <path d="M4 12q4-8 10-1M4 8l10 1M76 5q5-9 11-1M77 1l9 2" stroke="#7c8b2a" strokeWidth="2.500" />
            <path d="M0 33q6-6 13 0 8 2 10 7 5 3 5 8H16Q4 44 0 33z" fill="#3d8d4d" /><path d="M96 33q-8-10-14-2-8 0-12 6-9 3-10 11h22q10-4 14-15z" fill="#6cae52" />
          </I>
        </Search>
        <Apps>
          <AppIcon>
            <I w={48} h={44} vb="0 0 48 44"><rect x="12" y="0" width="36" height="32" rx="2" fill="#f1f1f1" /><rect x="0" y="12" width="36" height="32" rx="2" fill="#6a6a6a" /><path d="M12 12h24v20H12z" fill="#a9a9a9" /></I>
          </AppIcon>
          <AppIcon>
            <I s={48} vb="0 0 48 48">
              <defs>
                <linearGradient id="edgeA" x1="0" y1="0" x2="1" y2="0.300"><stop offset="0" stopColor="#2f9fe6" /><stop offset=".55" stopColor="#33c3d0" /><stop offset="1" stopColor="#62e04c" /></linearGradient>
                <linearGradient id="edgeB" x1="0" y1="0" x2="0.400" y2="1"><stop offset="0" stopColor="#0f5fae" /><stop offset="1" stopColor="#0d86e3" /></linearGradient>
              </defs>
              <path d="M0 22C2 8 12 0 24 0c15 0 24 11 24 20 0 9-6 12-12 12-7 0-9-2-7-5 3-4 0-10-6-11C12 12 3 15 0 22z" fill="url(#edgeA)" />
              <path d="M0 24C0 15 8 11 16 12c6 1 11 4 13 8-4-3-9-3-12 1-7 8-1 22 12 26-14 4-29-6-29-23z" fill="url(#edgeB)" />
              <path d="M13 30c0-6 3-10 6-12-3 12 8 23 25 18-4 7-10 11-18 12-8-2-13-10-13-18z" fill="#124f9d" />
            </I>
          </AppIcon>
          <AppIcon>
            <I w={46} h={42} vb="0 0 46 42">
              <defs>
                <linearGradient id="cpa" x1="0" y1="0" x2="0" y2="1"><stop offset="0" stopColor="#18a8ee" /><stop offset=".5" stopColor="#3aa27e" /><stop offset="1" stopColor="#f7d31c" /></linearGradient>
                <linearGradient id="cpb" x1="0" y1="0" x2="0" y2="1"><stop offset="0" stopColor="#a05be8" /><stop offset=".5" stopColor="#ee5f96" /><stop offset="1" stopColor="#ffa65b" /></linearGradient>
              </defs>
              <path d="M24 0h6q3 0 4 4l2 8h-8q-4 0-5 4z" fill="#1650c8" /><path d="M22 42h-6q-3 0-4-4l-2-8h8q4 0 5-4z" fill="#f4633a" />
              <path d="M11 0h16q-3 1-4 4l-6 22q-1 4-5 4H5Q-1 30 1 22L6 4q1-4 5-4z" fill="url(#cpa)" />
              <path d="M35 42H19q3-1 4-4l6-22q1-4 5-4h7q6 0 4 8l-5 18q-1 4-5 4z" fill="url(#cpb)" />
            </I>
          </AppIcon>
          <AppIcon $run>
            <I w={64} h={68} vb="-2 -4 64 68">
              <circle cx="30" cy="30" r="24" fill="#f9bc15" /><path d="M30 30L9.200 18a24 24 0 0 1 41.600 0z" fill="#e23b2e" /><path d="M30 30l-0 24A24 24 0 0 1 9.200 18z" fill="#2a9a48" /><path d="M30 18h20.800a24 24 0 0 1-20.800 36l10-18z" fill="#f9bc15" />
              <circle cx="30" cy="30" r="12" fill="#fff" /><circle cx="30" cy="30" r="9.500" fill="#2c79ec" />
              <circle cx="47" cy="12" r="15.500" fill="#cfcac6" /><circle cx="47" cy="7" r="5.500" fill="#b9876a" /><path d="M41 6q0-7 6-7t6 7q-6-4-12 0z" fill="#221a18" /><path d="M36 22q2-9 11-9t11 9q-10 9-22 0z" fill="#e8eef6" />
            </I>
          </AppIcon>
          <AppIcon $run>
            <I w={48} h={44} vb="0 0 48 44"><path d="M0 2q0-2 2-2h12l5 5H8v14H0z" fill="#d99a0b" /><path d="M0 8h16l3-3h27q2 0 2 2v35q0 2-2 2H2q-2 0-2-2z" fill="#fcc93a" /><path d="M8 44V34q0-4 4-4h24q4 0 4 4v10z" fill="#1173c2" /><path d="M15 36.500h18" stroke="#0b4b88" strokeWidth="2" /></I>
          </AppIcon>
          <AppIcon $run>
            <I w={48} h={46} vb="0 0 48 46">
              <path d="M2 3h28l6 6 1 32-35 4z" fill="#f2f5ee" stroke="#777" /><path d="M4 24l31-6 1 22-32 3z" fill="#55c52f" /><path d="M5 8h24M5 12h24M5 16h24" stroke="#b9c7d8" /><path d="M3 4h27" stroke="#333" strokeWidth="2.500" strokeDasharray="1.500 1.500" />
              <path d="M10 24q2-9 12-8 8 1 6 6-6 4-10 3-8 3-4 8" fill="#77d13a" stroke="#1e6b1a" strokeWidth="2" /><circle cx="21" cy="15" r="3" fill="#fff" stroke="#222" /><path d="M5 27h24" stroke="#5a3d21" strokeWidth="2" />
              <path d="M44 3l-12 28-2 4" stroke="#f0b323" strokeWidth="4" /><path d="M46 0l-2 5" stroke="#b2454a" strokeWidth="4" />
            </I>
          </AppIcon>
          <AppIcon $run><Amd /></AppIcon>
          <AppIcon $run>
            <I w={42} h={42} vb="0 0 42 42"><rect width="42" height="42" rx="8" fill="#b30b00" /><path d="M9 32c-2-4 8-8 22-9 5 0 3 4-1 2-8-4-13-12-11-16 3-2 3 5 0 12-3 7-7 13-10 11z" stroke="#fff" strokeWidth="2.600" /></I>
          </AppIcon>
          <Gap $w={5} />
          <AppIcon $w={79} $run $on><Amd /></AppIcon>
        </Apps>
        <Tray>
          <Chev d="up" w={22} h={13} sw={2.6} c="#fff" /><Gap $w={37} />
          <I w={33} h={22} vb="0 0 33 22"><circle cx="17" cy="9" r="9" fill="#8f8b8b" /><path d="M8 22a8 8 0 0 1 0-15q8-1 14 7h4v8z" fill="#c9c9c9" /><path d="M4 20q4-5 13-8 8-5 14 0 4 8-4 10H8z" fill="#fff" /></I>
          <Gap $w={36} />
          <Stack $al="center" $w="48px"><span>ENG</span><span>IN</span></Stack><Gap $w={35} />
          <I w={33} h={25} vb="0 0 33 25"><path d="M1 9a22 22 0 0 1 31 0M5.500 14a15.500 15.500 0 0 1 22 0M10.500 18.500a8.500 8.500 0 0 1 12 0" stroke="#fff" strokeWidth="2.300" /><circle cx="16.500" cy="22" r="3" fill="#fff" /></I>
          <Gap $w={14} />
          <I w={32} h={24} vb="0 0 32 24"><path d="M1.500 8h5l7-6.500v21L6.500 16h-5zM20 7l10 10M30 7L20 17" stroke="#fff" strokeWidth="2" /></I>
          <Gap $w={17} />
          <I w={33} h={21} vb="0 0 33 21"><rect x="1" y="1" width="27" height="19" rx="4" stroke="#fff" strokeWidth="2" /><rect x="4.500" y="4.500" width="20" height="12" rx="1.500" fill="#fff" /><path d="M29 7h2q2 0 2 2v3q0 2-2 2h-2z" fill="#fff" /></I>
          <Stack $al="flex-end" $w="157px" $ls={0.15} $fs={23.2}><span>03:59 PM</span><span>13-05-2025</span></Stack>
        </Tray>
      </TaskBar>
    </Screen>
  );
}
